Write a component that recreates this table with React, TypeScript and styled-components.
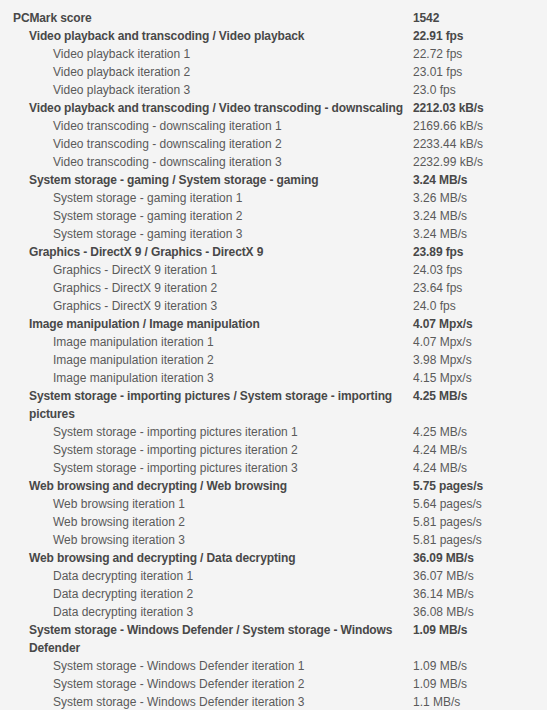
import React from "react";
import styled, { createGlobalStyle } from "styled-components";

const Global = createGlobalStyle`
  html, body { margin: 0; padding: 0; background: #f4f4f4; }
  body { font-family: "Liberation Sans", Arial, sans-serif; }
`;

const Page = styled.div`
  padding: 9px 0 0 13px;
  background: #f4f4f4;
  min-height: 710px;
  box-sizing: border-box;
`;

const Table = styled.div`
  display: grid;
  grid-template-columns: 400px auto;
  font-size: 12px;
  line-height: 18px;
  color: #555;
`;

const Label = styled.div<{ $level: number }>`
  padding-left: ${(p) => (p.$level === 0 ? 0 : p.$level === 1 ? 16 : 40)}px;
  padding-right: 2px;
  font-weight: ${(p) => (p.$level < 2 ? "bold" : "normal")};
  letter-spacing: ${(p) => (p.$level < 2 ? "-0.12px" : "0")};
  color: ${(p) => (p.$level < 2 ? "#484848" : "#5a5a5a")};
`;

const Value = styled.div<{ $bold: boolean }>`
  font-weight: ${(p) => (p.$bold ? "bold" : "normal")};
  letter-spacing: ${(p) => (p.$bold ? "-0.12px" : "0")};
  color: ${(p) => (p.$bold ? "#484848" : "#5a5a5a")};
  white-space: nowrap;
`;

type Group = { title: string; value: string; items: [string, string][] };

const groups: Group[] = [
  {
    title: "Video playback and transcoding / Video playback",
    value: "22.91 fps",
    items: [
      ["Video playback iteration 1", "22.72 fps"],
      ["Video playback iteration 2", "23.01 fps"],
      ["Video playback iteration 3", "23.0 fps"],
    ],
  },
  {
    title: "Video playback and transcoding / Video transcoding - downscaling",
    value: "2212.03 kB/s",
    items: [
      ["Video transcoding - downscaling iteration 1", "2169.66 kB/s"],
      ["Video transcoding - downscaling iteration 2", "2233.44 kB/s"],
      ["Video transcoding - downscaling iteration 3", "2232.99 kB/s"],
    ],
  },
  {
    title: "System storage - gaming / System storage - gaming",
    value: "3.24 MB/s",
    items: [
      ["System storage - gaming iteration 1", "3.26 MB/s"],
      ["System storage - gaming iteration 2", "3.24 MB/s"],
      ["System storage - gaming iteration 3", "3.24 MB/s"],
    ],
  },
  {
    title: "Graphics - DirectX 9 / Graphics - DirectX 9",
    value: "23.89 fps",
    items: [
      ["Graphics - DirectX 9 iteration 1", "24.03 fps"],
      ["Graphics - DirectX 9 iteration 2", "23.64 fps"],
      ["Graphics - DirectX 9 iteration 3", "24.0 fps"],
    ],
  },
  {
    title: "Image manipulation / Image manipulation",
    value: "4.07 Mpx/s",
    items: [
      ["Image manipulation iteration 1", "4.07 Mpx/s"],
      ["Image manipulation iteration 2", "3.98 Mpx/s"],
      ["Image manipulation iteration 3", "4.15 Mpx/s"],
    ],
  },
  {
    title: "System storage - importing pictures / System storage - importing pictures",
    value: "4.25 MB/s",
    items: [
      ["System storage - importing pictures iteration 1", "4.25 MB/s"],
      ["System storage - importing pictures iteration 2", "4.24 MB/s"],
      ["System storage - importing pictures iteration 3", "4.24 MB/s"],
    ],
  },
  {
    title: "Web browsing and decrypting / Web browsing",
    value: "5.75 pages/s",
    items: [
      ["Web browsing iteration 1", "5.64 pages/s"],
      ["Web browsing iteration 2", "5.81 pages/s"],
      ["Web browsing iteration 3", "5.81 pages/s"],
    ],
  },
  {
    title: "Web browsing and decrypting / Data decrypting",
    value: "36.09 MB/s",
    items: [
      ["Data decrypting iteration 1", "36.07 MB/s"],
      ["Data decrypting iteration 2", "36.14 MB/s"],
      ["Data decrypting iteration 3", "36.08 MB/s"],
    ],
  },
  {
    title: "System storage - Windows Defender / System storage - Windows Defender",
    value: "1.09 MB/s",
    items: [
      ["System storage - Windows Defender iteration 1", "1.09 MB/s"],
      ["System storage - Windows Defender iteration 2", "1.09 MB/s"],
      ["System storage - Windows Defender iteration 3", "1.1 MB/s"],
    ],
  },
];

export default function App() {
  return (
    <>
      <Global />
      <Page>
        <Table>
          <Label $level={0}>PCMark score</Label>
          <Value $bold>1542</Value>
          {groups.map((g) => (
            <React.Fragment key={g.title}>
              <Label $level={1}>{g.title}</Label>
              <Value $bold>{g.value}</Value>
              {g.items.map(([l, v]) => (
                <React.Fragment key={l}>
                  <Label $level={2}>{l}</Label>
                  <Value $bold={false}>{v}</Value>
                </React.Fragment>
              ))}
            </React.Fragment>
          ))}
        </Table>
      </Page>
    </>
  );
}
